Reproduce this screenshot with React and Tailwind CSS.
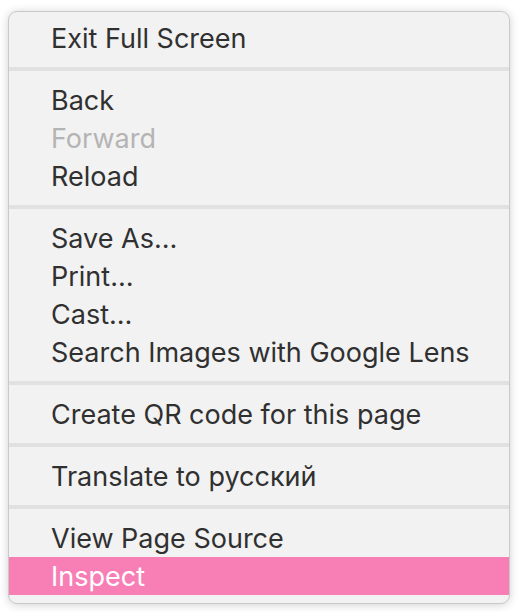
import React from 'react';

// Menu groups, separated by dividers
const groups = [
  [{ label: 'Exit Full Screen' }],
  [{ label: 'Back' }, { label: 'Forward', disabled: true }, { label: 'Reload' }],
  [{ label: 'Save As…' }, { label: 'Print…' }, { label: 'Cast…' }, { label: 'Search Images with Google Lens' }],
  [{ label: 'Create QR code for this page' }],
  [{ label: 'Translate to русский' }],
  [{ label: 'View Page Source' }, { label: 'Inspect', active: true }],
];

const MenuItem = ({ item }) => {
  let cls = 'text-[#303030]';
  if (item.disabled) cls = 'text-[#b4b4b4]';
  if (item.active) cls = 'bg-[#f87fb6] text-white';
  return (
    <div className={`h-[38px] flex items-center pl-[42px] pr-4 ${cls}`}>
      {item.label}
    </div>
  );
};

export default function App() {
  return (
    <div className="w-[520px] h-[612px] bg-white pt-[11px] pl-[8px] overflow-hidden">
      <div
        className="w-[502px] h-[593px] bg-[#f2f2f2] border border-[#c9c9c9] rounded-[9px] shadow-[0_1px_10px_rgba(0,0,0,0.18)] pt-[7px] overflow-hidden text-[27px] leading-none"
        style={{ fontFamily: 'Inter, "Noto Sans", sans-serif' }}
      >
        {groups.map((group, gi) => (
          <div key={gi}>
            {gi > 0 && <div className="h-[4px] bg-[#e1e1e1] my-[10px]" />}
            {group.map((item, i) => (
              <MenuItem key={i} item={item} />
            ))}
          </div>
        ))}
      </div>
    </div>
  );
}
